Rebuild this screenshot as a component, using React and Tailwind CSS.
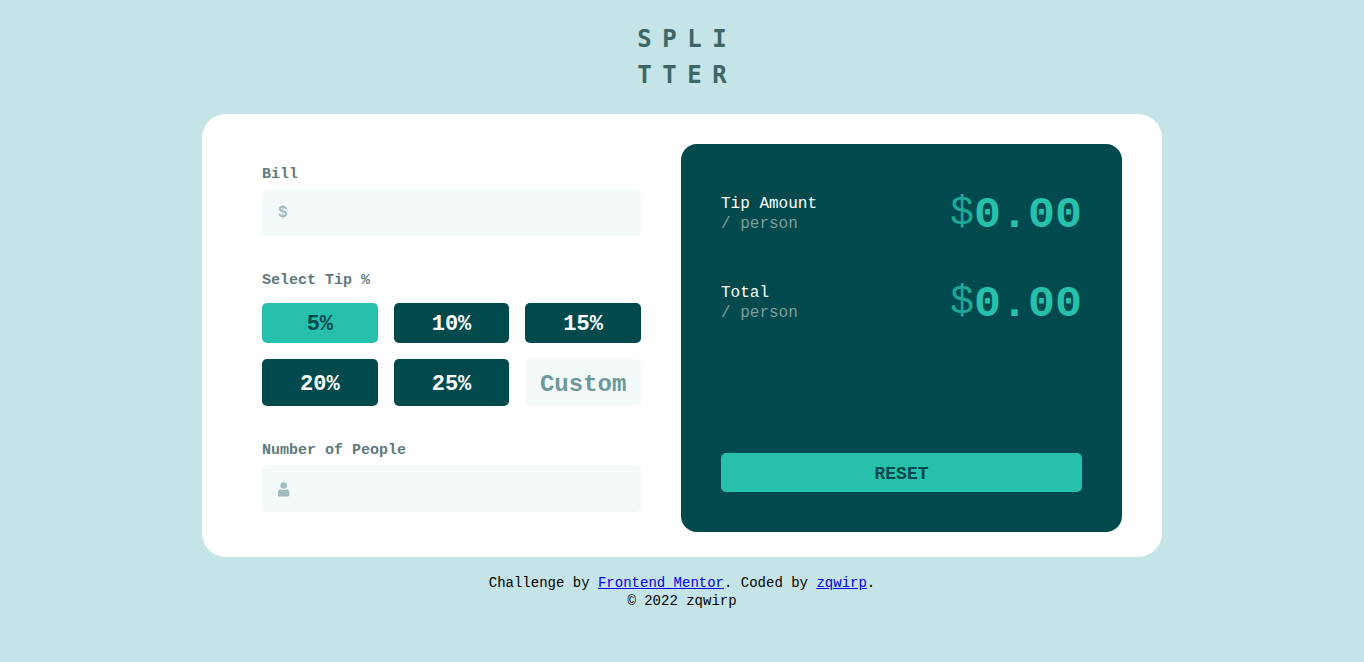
import { useState } from "react";

const TIPS = [5, 10, 15, 20, 25];

function Logo() {
  return (
    <h1
      aria-label="Splitter"
      className="grid grid-cols-4 text-center font-['DejaVu_Sans_Mono',monospace] text-2xl leading-9 font-bold text-[#3d6666]"
    >
      {"SPLITTER".split("").map((letter, i) => (
        <span key={i} className="w-[25px]">
          {letter}
        </span>
      ))}
    </h1>
  );
}

function PersonIcon() {
  return (
    <svg viewBox="0 0 13 16" className="h-4 w-[13px] fill-[#9dbcbe]" aria-hidden="true">
      <circle cx="5.7" cy="4.5" r="3.3" />
      <path d="M2.6 8.2C3.4 8.9 4.5 9.2 5.7 9.200s2.300-.3 3.100-1c1.500.2 2.400 1.500 2.600 3.300.1 1.100.1 2-.1 2.700-.3.900-1 1.300-2 1.300H2.100c-1 0-1.700-.4-2-1.300-.2-.7-.2-1.600-.1-2.700.2-1.800 1.100-3.100 2.600-3.300Z" />
    </svg>
  );
}

function NumberField({ id, label, icon, value, onChange }) {
  return (
    <div>
      <label htmlFor={id} className="block text-[15px] leading-[22px] font-bold text-[#5e7a7d]">
        {label}
      </label>
      <div className="mt-[3px] flex h-[47px] items-center rounded-[5px] bg-[#f4fafa] px-4">
        {icon}
        <input
          id={id}
          inputMode="decimal"
          value={value}
          onChange={(e) => onChange(e.target.value)}
          className="h-full min-w-0 flex-1 bg-transparent text-right text-2xl font-bold text-[#00494d] outline-none"
        />
      </div>
    </div>
  );
}

function Amount({ label, value }) {
  return (
    <div className="flex items-center justify-between">
      <div className="text-base leading-5">
        <p className="font-medium text-white">{label}</p>
        <p className="text-[#7f9d9f]">/ person</p>
      </div>
      <p className="flex items-center text-[45px] leading-[60px] font-bold text-[#26c0ab]">
        <span className="text-[40px] leading-[60px] font-normal opacity-80">$</span>
        <span className="pt-1 leading-[56px]">{value.toFixed(2)}</span>
      </p>
    </div>
  );
}

export default function App() {
  const [bill, setBill] = useState("");
  const [people, setPeople] = useState("");
  const [tip, setTip] = useState(5);
  const [custom, setCustom] = useState("");

  const rate = (custom === "" ? tip : Number(custom) || 0) / 100;
  const total = Number(bill) || 0;
  const count = Number(people) || 0;
  const tipEach = count > 0 ? (total * rate) / count : 0;
  const totalEach = count > 0 ? (total * (1 + rate)) / count : 0;

  const reset = () => {
    setBill("");
    setPeople("");
    setTip(5);
    setCustom("");
  };

  return (
    <div className="flex min-h-screen flex-col items-center bg-[#c5e4e7] pt-[21px] font-['Liberation_Mono',monospace]">
      <Logo />
      <main className="mt-[21px] grid w-full max-w-[960px] rounded-3xl bg-white px-10 pt-[30px] pb-[25px] md:grid-cols-[439fr_441fr]">
        <form className="flex flex-col gap-[34px] py-5 pr-10 pl-5" onSubmit={(e) => e.preventDefault()}>
          <NumberField
            id="bill"
            label="Bill"
            value={bill}
            onChange={setBill}
            icon={<span className="text-base font-bold text-[#9dbcbe]">$</span>}
          />
          <fieldset>
            <legend className="text-[15px] leading-[22px] font-bold text-[#5e7a7d]">Select Tip %</legend>
            <div className="mt-[11px] grid grid-cols-3 grid-rows-[40px_47px] gap-4">
              {TIPS.map((t) => (
                <button
                  key={t}
                  type="button"
                  onClick={() => {
                    setTip(t);
                    setCustom("");
                  }}
                  className={`rounded-[5px] pt-1 text-[22px] leading-8 font-bold ${
                    custom === "" && tip === t ? "bg-[#26c0ab] text-[#00494d]" : "bg-[#00494d] text-white"
                  }`}
                >
                  {t}%
                </button>
              ))}
              <input
                aria-label="Custom tip percentage"
                placeholder="Custom"
                value={custom}
                onChange={(e) => setCustom(e.target.value)}
                className="w-full min-w-0 rounded-[5px] bg-[#f4fafa] pt-1 text-center text-2xl leading-8 font-bold text-[#00494d] outline-none placeholder:text-[#6f989c]"
              />
            </div>
          </fieldset>
          <NumberField
            id="people"
            label="Number of People"
            value={people}
            onChange={setPeople}
            icon={<PersonIcon />}
          />
        </form>
        <section className="flex flex-col gap-[29px] rounded-2xl bg-[#00494d] p-10">
          <Amount label="Tip Amount" value={tipEach} />
          <Amount label="Total" value={totalEach} />
          <button
            type="button"
            onClick={reset}
            className="mt-auto h-[39px] rounded-[5px] bg-[#26c0ab] pt-0.5 text-lg leading-6 font-bold text-[#00494d]"
          >
            RESET
          </button>
        </section>
      </main>
      <footer className="mt-[17px] text-center text-sm leading-[18px] text-black">
        <p>
          Challenge by{" "}
          <a href="https://www.frontendmentor.io" className="text-[#0000ee] underline">
            Frontend Mentor
          </a>
          . Coded by{" "}
          <a href="https://github.com/zqwirp" className="text-[#0000ee] underline">
            zqwirp
          </a>
          .
        </p>
        <p>© 2022 zqwirp</p>
      </footer>
    </div>
  );
}
